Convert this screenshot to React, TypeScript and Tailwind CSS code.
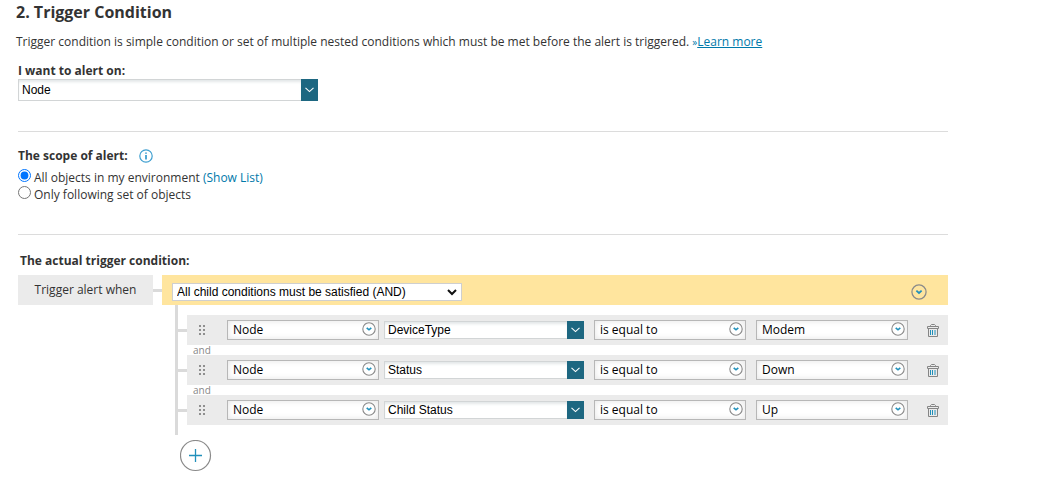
import { useState } from 'react';

const conditions = [
  { object: 'Node', field: 'DeviceType', operator: 'is equal to', value: 'Modem' },
  { object: 'Node', field: 'Status', operator: 'is equal to', value: 'Down' },
  { object: 'Node', field: 'Child Status', operator: 'is equal to', value: 'Up' },
];

type FieldProps = {
  value: string;
  label: string;
};

// Round chevron shared by the grey dropdowns and the group header
function CircleChevron({ className }: { className: string }) {
  return (
    <svg viewBox="0 0 14 14" fill="none" className={className}>
      <circle cx="7" cy="7" r="6.2" stroke="#8a8a8a" strokeWidth="1.1" />
      <path d="M4.7 5.8 7 7.8 9.3 5.8" stroke="#2090bb" strokeWidth="1.6" />
    </svg>
  );
}

function Dropdown({ value, label }: FieldProps) {
  return (
    <div className="relative w-[152px] shrink-0">
      <select
        aria-label={label}
        className="block h-5 w-full appearance-none border border-[#b7b7b7] bg-white pl-[5px] pr-5 text-xs leading-[18px] text-black shadow-[inset_0_0_6px_#e4e4e4]"
      >
        <option>{value}</option>
      </select>
      <CircleChevron className="pointer-events-none absolute right-[3px] top-[2px] size-[14px]" />
    </div>
  );
}

function ComboBox({ value, label, id }: FieldProps & { id?: string }) {
  return (
    <div className="flex h-full w-full">
      <input
        id={id}
        aria-label={label}
        defaultValue={value}
        className="min-w-0 flex-1 border border-r-0 border-[#d2d5d6] bg-white px-[3px] font-['Liberation_Sans',Arial,sans-serif] text-xs text-black shadow-[inset_0_3px_3px_-1px_#e3e7e8]"
      />
      <button
        type="button"
        aria-label={`Open ${label}`}
        className="flex w-[17px] items-center justify-center bg-[#1d6781]"
      >
        <svg viewBox="0 0 9 6" fill="none" className="h-[6px] w-[9px]">
          <path d="M0.5 0.8 4.5 4.6 8.5 0.8" stroke="#fff" strokeWidth="1.1" />
        </svg>
      </button>
    </div>
  );
}

function TrashIcon() {
  return (
    <svg viewBox="0 0 12 13" fill="none" className="h-[13px] w-3">
      <path d="M0.5 4.5V2.5H11.5V4.5Z" stroke="#858585" />
      <path d="M3.5 2.5V1.5L4.5 0.5H7.5L8.5 1.5V2.5" stroke="#858585" />
      <path d="M1.5 4.5V12.5H10.5V4.5" stroke="#858585" />
      <path d="M3.5 6V11M5.5 6V11M8 6V11" stroke="#2090bb" />
    </svg>
  );
}

function DragHandle() {
  return (
    <svg viewBox="0 0 6 10" fill="#8f8f8f" className="h-[10px] w-[6px]">
      {[0, 4, 8].map((y) => (
        <g key={y}>
          <rect x="0" y={y} width="2" height="2" />
          <rect x="4" y={y} width="2" height="2" />
        </g>
      ))}
    </svg>
  );
}

export default function App() {
  const [scope, setScope] = useState('all');

  return (
    <main className="mr-28 pb-4 pl-[18px] font-['Open_Sans',sans-serif] text-xs text-[#333]">
      <header className="-ml-[2px]">
        <h1 className="pt-px text-base font-bold leading-[22px]">2. Trigger Condition</h1>
        <p className="mt-[11px] whitespace-nowrap leading-4">
          Trigger condition is simple condition or set of multiple nested conditions which must be met before the
          alert is triggered. <span className="text-[10px] text-[#0079aa]">»</span>
          <a href="#learn" className="text-[#0079aa] underline">
            Learn more
          </a>
        </p>
      </header>

      <section className="border-b border-[#dcdcdc] pb-[30px] pt-[13px]">
        <label htmlFor="alert-on" className="block font-bold leading-4">
          I want to alert on:
        </label>
        <div className="h-[22px] w-[300px]">
          <ComboBox id="alert-on" label="I want to alert on" value="Node" />
        </div>
      </section>

      <section className="border-b border-[#dcdcdc] pb-[30px] pt-4">
        <h2 className="flex items-center gap-[11px] font-bold leading-4">
          The scope of alert:
          <svg viewBox="0 0 14 14" fill="none" className="size-[14px]">
            <circle cx="7" cy="7" r="6.2" stroke="#3f9fd0" strokeWidth="1.2" />
            <path d="M7 6V10.4M7 3.4V4.8" stroke="#3f9fd0" strokeWidth="1.8" />
          </svg>
        </h2>
        <div className="mt-[5px] flex h-[17px] gap-[3px] leading-[18px]">
          <input
            type="radio"
            id="scope-all"
            name="scope"
            checked={scope === 'all'}
            onChange={() => setScope('all')}
            className="size-[13px]"
          />
          <p>
            <label htmlFor="scope-all">All objects in my environment</label>{' '}
            <a href="#list" className="text-[#0079aa]">
              (Show List)
            </a>
          </p>
        </div>
        <div className="flex h-[18px] gap-[3px] leading-[18px]">
          <input
            type="radio"
            id="scope-set"
            name="scope"
            checked={scope === 'set'}
            onChange={() => setScope('set')}
            className="size-[13px]"
          />
          <label htmlFor="scope-set">Only following set of objects</label>
        </div>
      </section>

      <section className="pt-[18px]">
        <h2 className="pl-[2px] font-bold leading-4">The actual trigger condition:</h2>
        <div className="mt-[6px] flex items-center">
          <div className="h-[30px] w-[135px] bg-[#ebebeb] text-center leading-[30px]">Trigger alert when</div>
          <div className="h-[3px] w-[9px] bg-[#dadada]" />
          <div className="flex h-[30px] flex-1 items-center justify-between bg-[#ffe59e] pl-[10px] pr-[21px] pt-[3px]">
            <div className="relative w-[290px]">
              <select
                aria-label="Group operator"
                className="block h-[18px] w-full appearance-none border border-[#cfcfcf] bg-white pl-1 pr-5 font-['Liberation_Sans',Arial,sans-serif] text-xs leading-4 text-black"
              >
                <option>All child conditions must be satisfied (AND)</option>
              </select>
              <svg
                viewBox="0 0 10 7"
                fill="none"
                className="pointer-events-none absolute right-[5px] top-[6px] h-[7px] w-[10px]"
              >
                <path d="M1 1 5 5 9 1" stroke="#111" strokeWidth="2" />
              </svg>
            </div>
            <button type="button" aria-label="Group options">
              <CircleChevron className="size-4" />
            </button>
          </div>
        </div>

        {/* Condition tree */}
        <div className="ml-[157px] border-l-[3px] border-[#dadada] py-[10px]">
          {conditions.map((condition, idx) => (
            <div key={condition.field}>
              {idx > 0 && (
                <div className="h-[10px] pl-[15px] text-[10px] leading-[10px] text-[#888]">and</div>
              )}
              <div className="flex items-center">
                <div className="h-[3px] w-[9px] bg-[#dadada]" />
                <div className="flex h-[30px] flex-1 items-center bg-[#ebebeb] pl-3 pr-[9px]">
                  <DragHandle />
                  <div className="ml-[22px] flex items-center">
                    <Dropdown label="Object" value={condition.object} />
                    <div className="ml-[5px] h-[18px] w-[200px]">
                      <ComboBox label="Field" value={condition.field} />
                    </div>
                    <div className="ml-[10px] flex gap-[10px]">
                      <Dropdown label="Operator" value={condition.operator} />
                      <Dropdown label="Value" value={condition.value} />
                    </div>
                  </div>
                  <button type="button" aria-label="Delete condition" className="ml-auto">
                    <TrashIcon />
                  </button>
                </div>
              </div>
            </div>
          ))}
        </div>

        <button type="button" aria-label="Add condition" className="ml-[162px] mt-[5px] block">
          <svg viewBox="0 0 32 32" fill="none" className="size-8">
            <circle cx="15.5" cy="15.5" r="15" stroke="#8a8a8a" strokeWidth="1.2" />
            <path d="M9 15.5H22M15.5 9V22" stroke="#2090bb" strokeWidth="1.3" />
          </svg>
        </button>
      </section>
    </main>
  );
}
